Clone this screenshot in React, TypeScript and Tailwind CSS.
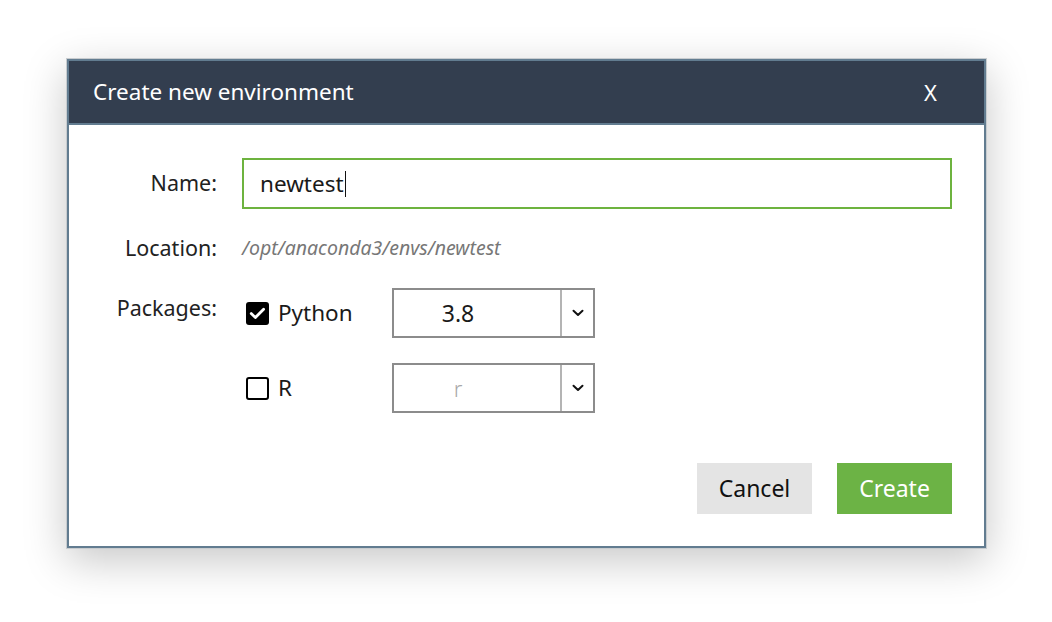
import React from "react";

const font = { fontFamily: '"Noto Sans", "Open Sans", sans-serif' };

function Checkbox({ checked }: { checked: boolean }) {
  return checked ? (
    <div className="w-[23px] h-[23px] rounded-[3px] bg-black flex items-center justify-center">
      <svg width="19" height="19" viewBox="0 0 19 19">
        <path d="M3.2 9.6 L7.4 13.6 L15.6 5.2" fill="none" stroke="white" strokeWidth="2.8" strokeLinecap="round" strokeLinejoin="round" />
      </svg>
    </div>
  ) : (
    <div className="w-[23px] h-[23px] rounded-[3px] border-2 border-black bg-white" />
  );
}

function Select({ value, placeholder }: { value?: string; placeholder?: string }) {
  return (
    <div className="w-[203px] h-[50px] border-2 border-[#8c8c8c] flex">
      <div className="flex-1 flex items-center justify-center pr-[38px]">
        {value ? (
          <span className="text-[23px] text-[#1a1a1a]">{value}</span>
        ) : (
          <span className="text-[22px] text-[#a8a8a8] font-light">{placeholder}</span>
        )}
      </div>
      <div className="w-[2px] bg-[#b4b4b4]" />
      <div className="w-[31px] flex items-center justify-center">
        <svg width="12" height="8" viewBox="0 0 12 8">
          <path d="M1.5 1.8 L6 6 L10.5 1.8" fill="none" stroke="#111" strokeWidth="2" strokeLinecap="round" strokeLinejoin="round" />
        </svg>
      </div>
    </div>
  );
}

export default function App() {
  return (
    <div className="w-[1052px] h-[622px] bg-white pt-[58px] pl-[66px]" style={font}>
      <div className="w-[921px] h-[491px] border border-[#c8cccf] shadow-[0_12px_40px_rgba(0,0,0,0.22)]">
        <div className="w-full h-full border-2 border-[#627c90] bg-white flex flex-col">
          <div className="h-[64px] shrink-0 bg-[#333e4f] border-b-2 border-[#627c90] flex items-center justify-between pl-[24px] pr-[47px]">
            <span className="text-white text-[22.5px] leading-none">Create new environment</span>
            <span className="text-white text-[22px] leading-none">X</span>
          </div>
          <div className="flex-1 pt-[33px] pr-[32px] flex flex-col">
            <div className="flex items-center h-[51px]">
              <div className="w-[148px] text-right text-[21.5px] text-[#222]">Name:</div>
              <div className="ml-[25px] flex-1 h-[51px] border-2 border-[#6db33f] flex items-center pl-[16px]">
                <span className="text-[22.5px] text-[#1a1a1a]">newtest</span>
                <span className="w-[1px] h-[26px] bg-[#111] ml-[1px]" />
              </div>
            </div>
            <div className="flex items-center mt-[25px] h-[28px]">
              <div className="w-[148px] text-right text-[21.5px] text-[#222]">Location:</div>
              <div className="ml-[25px] text-[19.5px] italic text-[#777]">/opt/anaconda3/envs/newtest</div>
            </div>
            <div className="flex mt-[26px]">
              <div className="w-[148px] text-right text-[21.5px] text-[#222] pt-[4px]">Packages:</div>
              <div className="ml-[25px] flex flex-col gap-[25px]">
                <div className="flex items-center">
                  <div className="w-[150px] flex items-center pl-[4px]">
                    <Checkbox checked />
                    <span className="ml-[9px] text-[22.5px] text-[#1a1a1a]">Python</span>
                  </div>
                  <Select value="3.8" />
                </div>
                <div className="flex items-center">
                  <div className="w-[150px] flex items-center pl-[4px]">
                    <Checkbox checked={false} />
                    <span className="ml-[9px] text-[22.5px] text-[#1a1a1a]">R</span>
                  </div>
                  <Select placeholder="r" />
                </div>
              </div>
            </div>
            <div className="flex justify-end gap-[25px] mt-[50px]">
              <button className="w-[115px] h-[51px] bg-[#e4e4e4] text-[23px] text-[#111]">Cancel</button>
              <button className="w-[115px] h-[51px] bg-[#6cb345] text-[23px] text-white">Create</button>
            </div>
          </div>
        </div>
      </div>
    </div>
  );
}
